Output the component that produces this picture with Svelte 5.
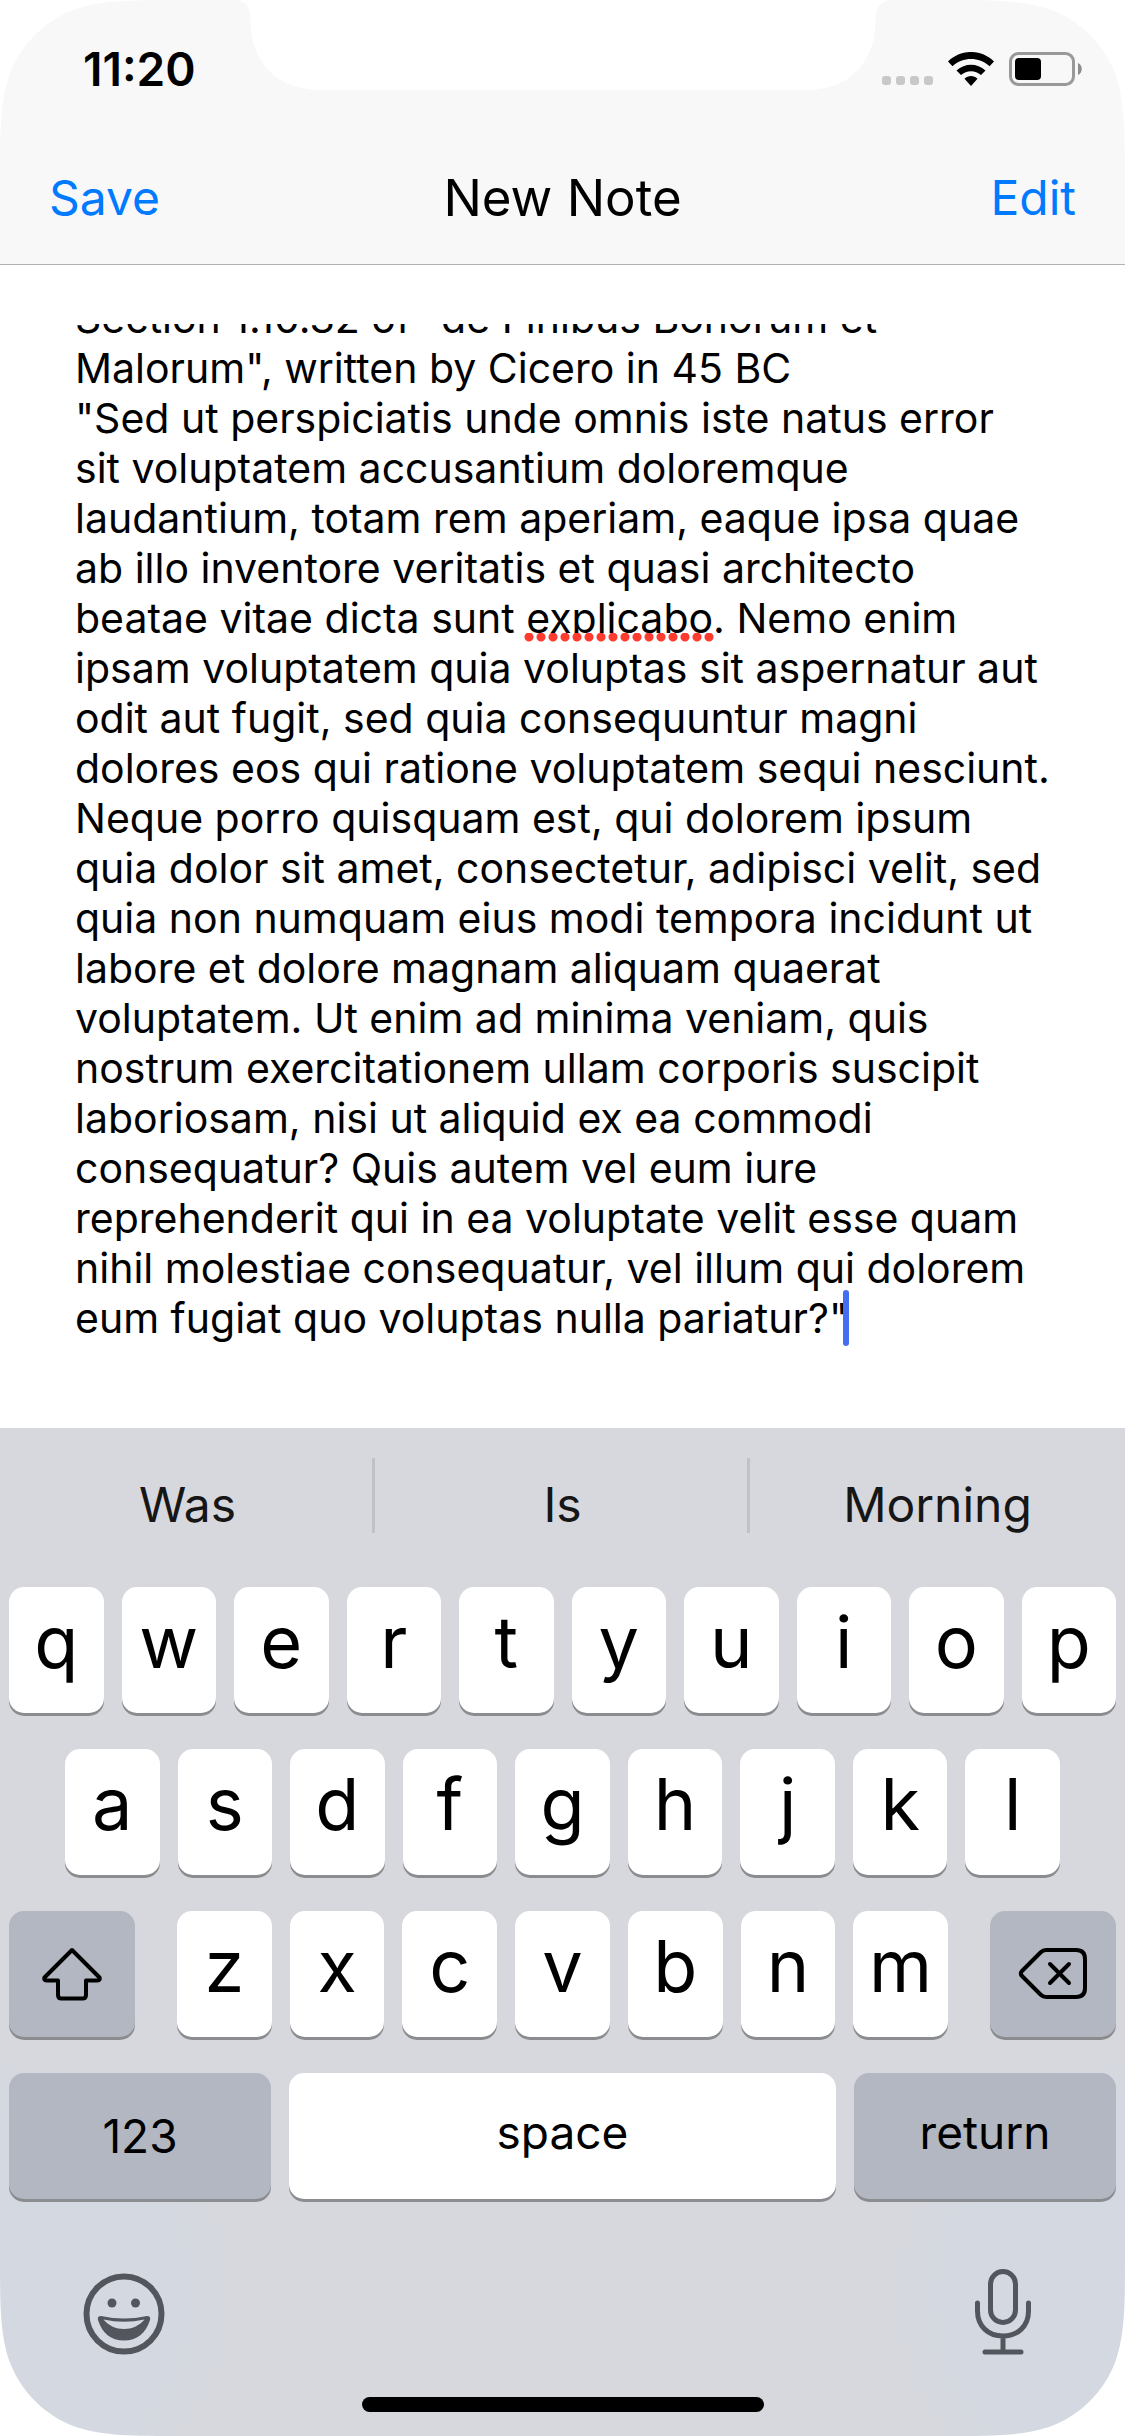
<script>
  import { onMount } from 'svelte';

  const suggestions = ['Was', 'Is', 'Morning'];
  const topRow = [...'qwertyuiop'];
  const middleRow = [...'asdfghjkl'];
  const bottomRow = [...'zxcvbnm'];
  const corners = ['top-left', 'top-right', 'bottom-right', 'bottom-left'];

  let note = $state(
    'Section 1.10.32 of "de Finibus Bonorum et Malorum", written by Cicero in 45 BC\n' +
      '"Sed ut perspiciatis unde omnis iste natus error sit voluptatem accusantium doloremque ' +
      'laudantium, totam rem aperiam, eaque ipsa quae ab illo inventore veritatis et quasi architecto ' +
      'beatae vitae dicta sunt explicabo. Nemo enim ipsam voluptatem quia voluptas sit aspernatur aut ' +
      'odit aut fugit, sed quia consequuntur magni dolores eos qui ratione voluptatem sequi nesciunt. ' +
      'Neque porro quisquam est, qui dolorem ipsum quia dolor sit amet, consectetur, adipisci velit, sed ' +
      'quia non numquam eius modi tempora incidunt ut labore et dolore magnam aliquam quaerat ' +
      'voluptatem. Ut enim ad minima veniam, quis nostrum exercitationem ullam corporis suscipit ' +
      'laboriosam, nisi ut aliquid ex ea commodi consequatur? Quis autem vel eum iure ' +
      'reprehenderit qui in ea voluptate velit esse quam nihil molestiae consequatur, vel illum qui dolorem ' +
      'eum fugiat quo voluptas nulla pariatur?"'
  );

  let editor;

  // The note opens scrolled to its end, where the caret is.
  onMount(() => {
    editor.scrollTop = editor.scrollHeight;
  });
</script>

<div class="screen">
  <header>
    <div class="status">
      <time>11:20</time>
      <div class="indicators">
        <div class="signal"><i></i><i></i><i></i><i></i></div>
        <svg class="wifi" viewBox="0 0 46 34" role="img" aria-label="Wi-Fi">
          <path d="M0 9.5C13-3.200 33-3.200 46 9.500L41.500 14.300C31 4.600 15 4.600 4.500 14.300Z" />
          <path d="M8.500 18.500C17 10.700 29 10.700 37.500 18.500L33 23.100C27.500 17.900 18.500 17.900 13 23.100Z" />
          <path d="M16.500 26.800C20 23.200 26 23.200 29.500 26.800L23 34Z" />
        </svg>
        <svg class="battery" viewBox="0 0 73 34" role="img" aria-label="Battery 40%">
          <rect x="1.500" y="1.500" width="63" height="31" rx="8" fill="none" stroke="#999" stroke-width="3" />
          <rect x="6" y="6" width="26" height="22" rx="4" />
          <path d="M69 11C74 13 74 21 69 23Z" fill="#8c8c8c" />
        </svg>
      </div>
    </div>
    <nav>
      <button class="action">Save</button>
      <h1>New Note</h1>
      <button class="action end">Edit</button>
    </nav>
  </header>

  <main>
    <div class="note">
      <textarea aria-label="Note" spellcheck="false" bind:this={editor} bind:value={note}></textarea>
      <span class="misspelling"></span>
      <span class="caret"></span>
    </div>
  </main>

  <section class="keyboard" aria-label="Keyboard">
    <div class="suggestions">
      {#each suggestions as word}
        <button>{word}</button>
      {/each}
    </div>

    <div class="keys">
      <div class="row">
        {#each topRow as letter}
          <button class="key">{letter}</button>
        {/each}
      </div>
      <div class="row middle">
        {#each middleRow as letter}
          <button class="key">{letter}</button>
        {/each}
      </div>
      <div class="row bottom">
        <button class="key dark icon" aria-label="Shift">
          <svg width="60" height="54" viewBox="0 0 60 54">
            <path d="M30 3L57.500 30.500Q58.500 33.500 55.500 33.500H44V48Q44 51.500 40.500 51.500H19.500Q16 51.500 16 48V33.500H4.500Q1.500 33.500 2.500 30.500Z" />
          </svg>
        </button>
        <div class="letters">
          {#each bottomRow as letter}
            <button class="key">{letter}</button>
          {/each}
        </div>
        <button class="key dark icon" aria-label="Delete">
          <svg width="70" height="52" viewBox="0 0 70 52">
            <path d="M28 2H58Q67 2 67 11V40Q67 49 58 49H28Q25 49 22.500 46.500L4 28Q1.500 25.500 4 23L22.500 4.500Q25 2 28 2Z" />
            <path d="M32 16L51 35M51 16L32 35" />
          </svg>
        </button>
      </div>
      <div class="row functions">
        <button class="key dark word numbers">123</button>
        <button class="key word">space</button>
        <button class="key dark word">return</button>
      </div>
    </div>

    <div class="tools">
      <button aria-label="Emoji">
        <svg width="82" height="82" viewBox="0 0 82 82">
          <circle cx="41" cy="41" r="37.500" fill="none" stroke="#53565d" stroke-width="6" />
          <circle cx="29" cy="30" r="4.500" />
          <circle cx="52.500" cy="30" r="4.500" />
          <path
            fill-rule="evenodd"
            d="M18 43Q41 48 64 43Q68 43 67 47C63 60 54 67.500 41 67.500C28 67.500 19 60 15 47Q14 43 18 43ZM20.500 46.500C26 53 33 56 41 56C49 56 56 53 61.500 46.500Q41 51 20.500 46.500Z"
          />
        </svg>
      </button>
      <button aria-label="Dictate">
        <svg class="mic" width="58" height="86" viewBox="0 0 58 86">
          <rect x="16.500" y="2.500" width="25" height="51" rx="12.500" />
          <path d="M3.500 34V42C3.500 57 14 67 29 67S54.500 57 54.500 42V34M29 67V83M11 83H47" />
        </svg>
      </button>
    </div>
    <div class="home"></div>
  </section>

  <svg class="notch" width="660" height="90" viewBox="0 0 660 90" aria-hidden="true">
    <path d="M0 0C12 0 17.500 6 17.500 20C17.500 62 43 90 87 90H573C617 90 642.500 62 642.500 20C642.500 6 648 0 660 0Z" />
  </svg>
  {#each corners as corner}
    <svg class="corner {corner}" width="184" height="184" viewBox="0 0 184 184" aria-hidden="true">
      <path d="M0 0H184C131 0 104 0 76 9C45 20 20 45 9 76C0 104 0 131 0 184Z" />
    </svg>
  {/each}
</div>

<style>
  :global(body) {
    background: #fff;
  }

  .screen {
    position: relative;
    display: flex;
    flex-direction: column;
    min-height: 100vh;
    overflow: hidden;
    font-family: Inter, 'Liberation Sans', sans-serif;
    color: #000;
  }

  button {
    margin: 0;
    padding: 0;
    border: 0;
    background: none;
    font: inherit;
    color: inherit;
  }

  svg {
    display: block;
  }

  header {
    background: #f8f8f8;
    border-bottom: 1px solid #b2b2b2;
  }

  .status {
    display: flex;
    justify-content: space-between;
    align-items: flex-end;
    height: 86px;
    padding: 0 43px 0 83px;
  }

  time {
    font-size: 46px;
    font-weight: 600;
    line-height: 34px;
  }

  .indicators {
    display: flex;
    align-items: flex-end;
    gap: 15px;
  }

  .signal {
    display: flex;
    gap: 5px;
    padding-bottom: 1px;
  }

  .signal i {
    width: 9px;
    height: 9px;
    border-radius: 3px;
    background: #c8c8c8;
  }

  .wifi {
    width: 46px;
    height: 34px;
  }

  .battery {
    width: 73px;
    height: 34px;
  }

  nav {
    display: grid;
    grid-template-columns: 1fr auto 1fr;
    align-items: center;
    height: 60px;
    padding: 82px 49px 36px;
    line-height: 60px;
  }

  .action {
    justify-self: start;
    font-size: 48px;
    color: #007aff;
  }

  .action.end {
    justify-self: end;
  }

  h1 {
    margin: 0;
    font-size: 51px;
    font-weight: 400;
  }

  main {
    flex: 1;
    display: flex;
    padding: 59px 75px 60px;
  }

  .note {
    position: relative;
    flex: 1;
    display: flex;
  }

  textarea {
    flex: 1;
    min-width: 0;
    min-height: 1044px;
    box-sizing: border-box;
    margin: 0;
    padding: 0 0 25px;
    border: 0;
    outline: 0;
    resize: none;
    overflow: hidden;
    background: none;
    font: 400 41px/50px Inter, 'Liberation Sans', sans-serif;
    color: #000;
  }

  .misspelling {
    position: absolute;
    top: 309px;
    left: 449px;
    width: 192px;
    height: 9px;
    background: radial-gradient(circle at 5px 4px, #ff3b30 4px, transparent 5px) 0 0 / 12px 9px;
  }

  .caret {
    position: absolute;
    top: 966px;
    left: 768px;
    width: 6px;
    height: 56px;
    border-radius: 3px;
    background: #446df2;
  }

  .keyboard {
    display: flex;
    flex-direction: column;
    background:
      radial-gradient(circle at 0 86%, #d4d8e0 180px, transparent 260px),
      radial-gradient(circle at 100% 86%, #d4d8e0 180px, transparent 260px),
      #d7d8dd;
  }

  .suggestions {
    display: grid;
    grid-template-columns: repeat(3, 1fr);
    padding: 30px 0 54px;
  }

  .suggestions button {
    height: 75px;
    padding: 18px 0 0 3px;
    border-right: 3px solid #c1c2c7;
    font-size: 48px;
    line-height: 57px;
    color: #161616;
  }

  .suggestions button:last-child {
    padding-left: 0;
    border-right: 0;
  }

  .keys {
    display: grid;
    gap: 36px;
    padding: 0 9px;
  }

  .row {
    display: grid;
    grid-template-columns: repeat(10, 1fr);
    gap: 18px;
  }

  .row.middle {
    grid-template-columns: repeat(9, 1fr);
    padding: 0 56px;
  }

  .row.bottom {
    grid-template-columns: 126px 1fr 126px;
    gap: 42px;
  }

  .letters {
    display: grid;
    grid-template-columns: repeat(7, 1fr);
    gap: 18px;
  }

  .row.functions {
    grid-template-columns: 262fr 547fr 262fr;
  }

  .key {
    height: 126px;
    padding-bottom: 16px;
    border-radius: 15px;
    background: #fff;
    box-shadow: 0 3px 0 #8b8c90;
    font-size: 72px;
    font-weight: 400;
    line-height: 110px;
  }

  .key.dark {
    background: #b3b7c1;
  }

  .key.word {
    padding-bottom: 8px;
    font-size: 46px;
    line-height: 118px;
  }

  .key.numbers {
    padding-bottom: 0;
    line-height: 126px;
  }

  .key.icon {
    display: grid;
    place-items: center;
    padding-bottom: 0;
  }

  .key.icon svg {
    fill: none;
    stroke: #000;
    stroke-width: 4;
    stroke-linecap: round;
    stroke-linejoin: round;
  }

  .tools {
    display: flex;
    justify-content: space-between;
    align-items: flex-end;
    height: 86px;
    padding: 70px 93px 42px 83px;
  }

  .tools svg {
    fill: #53565d;
  }

  .tools .mic {
    fill: none;
    stroke: #53565d;
    stroke-width: 5;
    stroke-linecap: round;
  }

  .home {
    align-self: center;
    width: 402px;
    height: 15px;
    margin-bottom: 24px;
    border-radius: 8px;
    background: #000;
  }

  .notch {
    position: absolute;
    top: 0;
    left: 50%;
    margin-left: -330px;
    fill: #fff;
  }

  .corner {
    position: absolute;
    fill: #fff;
  }

  .top-left {
    top: 0;
    left: 0;
  }

  .top-right {
    top: 0;
    right: 0;
    transform: rotate(90deg);
  }

  .bottom-right {
    right: 0;
    bottom: 0;
    transform: rotate(180deg);
  }

  .bottom-left {
    bottom: 0;
    left: 0;
    transform: rotate(270deg);
  }
</style>
